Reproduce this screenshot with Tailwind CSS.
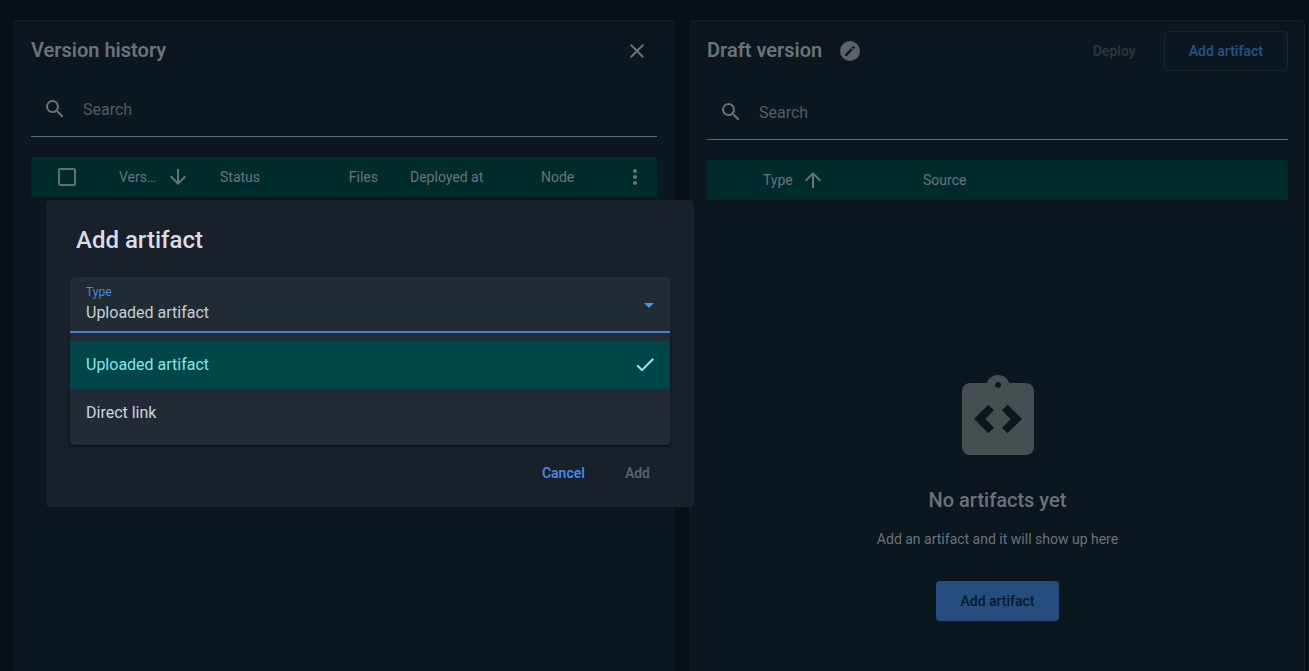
<!DOCTYPE html>
<html lang="en">

<head>
    <meta charset="UTF-8">
    <meta name="viewport" content="width=device-width, initial-scale=1.0">
    <title>Add artifact</title>
    <script src="https://cdn.jsdelivr.net/npm/@tailwindcss/browser@4"></script>
</head>

<body class="bg-[#080f17] font-['Roboto',sans-serif] text-sm text-[#69737b]">
    <main class="relative grid grid-cols-[660fr_615fr] gap-4 h-screen overflow-hidden pt-5 pl-3.5 pr-1">

        <!-- Version history -->
        <section class="rounded-t border border-b-0 border-[#151e26] bg-[#0b161e] px-4 pt-2.5">
            <header class="flex h-10 items-center justify-between mb-2.5">
                <h2 class="pb-0.5 text-xl leading-6 font-semibold">Version history</h2>
                <button type="button" aria-label="Close" class="flex size-10 items-center justify-center">
                    <svg class="size-6" viewBox="0 0 24 24" fill="currentColor">
                        <path d="M19 6.41 17.59 5 12 10.59 6.41 5 5 6.41 10.59 12 5 17.59 6.41 19 12 13.41 17.59 19 19 17.59 13.41 12z" />
                    </svg>
                </button>
            </header>

            <label class="flex h-14 items-center rounded-t border-b border-[#616b73] bg-[#0b181f] pl-3 mb-5">
                <svg class="size-6 shrink-0" viewBox="0 0 24 24" fill="currentColor">
                    <path d="M15.5 14h-.79l-.28-.27A6.471 6.471 0 0 0 16 9.5 6.5 6.5 0 1 0 9.5 16c1.61 0 3.09-.59 4.23-1.57l.27.28v.79l5 4.99L20.49 19l-4.99-5zm-6 0C7.01 14 5 11.99 5 9.5S7.01 5 9.5 5 14 7.01 14 9.5 11.99 14 9.5 14z" />
                </svg>
                <input type="text" placeholder="Search" aria-label="Search versions"
                    class="ml-4 w-full bg-transparent pt-0.5 text-base placeholder:text-[#525c63] outline-none">
            </label>

            <table class="w-full table-fixed">
                <thead class="bg-[#002b2d]">
                    <tr class="h-10 text-left">
                        <th class="w-[72px]">
                            <input type="checkbox" aria-label="Select all versions"
                                class="block mx-auto size-[18px] appearance-none rounded-xs border-2 border-[#5f6f74]">
                        </th>
                        <th class="w-[101px] pl-4 font-normal">
                            <div class="flex items-center gap-2.5">
                                <span>Vers…</span>
                                <svg class="size-6" viewBox="0 0 24 24" fill="currentColor">
                                    <path d="m20 12-1.41-1.41L13 16.17V4h-2v12.17l-5.58-5.59L4 12l8 8 8-8z" />
                                </svg>
                            </div>
                        </th>
                        <th class="w-[100px] pl-4 font-normal">Status</th>
                        <th class="w-[90px] pr-4 text-right font-normal">Files</th>
                        <th class="w-[131px] pl-4 font-normal">Deployed at</th>
                        <th class="w-[88px] pl-4 font-normal">Node</th>
                        <th>
                            <button type="button" aria-label="Columns" class="block mx-auto">
                                <svg class="size-6" viewBox="0 0 24 24" fill="currentColor">
                                    <path d="M12 8c1.1 0 2-.9 2-2s-.9-2-2-2-2 .9-2 2 .9 2 2 2zm0 2c-1.1 0-2 .9-2 2s.9 2 2 2 2-.9 2-2-.9-2-2-2zm0 6c-1.1 0-2 .9-2 2s.9 2 2 2 2-.9 2-2-.9-2-2-2z" />
                                </svg>
                            </button>
                        </th>
                    </tr>
                </thead>
            </table>
        </section>

        <!-- Draft version -->
        <section class="rounded-t border border-b-0 border-[#151e26] bg-[#0b161e] px-4 pt-2.5">
            <header class="flex h-10 items-center mb-[13px]">
                <h2 class="pb-0.5 text-xl leading-6 font-semibold">Draft version</h2>
                <svg class="ml-4 size-6" viewBox="0 0 24 24" fill="none">
                    <circle cx="12" cy="12" r="10" fill="#5a6467" />
                    <path fill="#0b161e" d="M7 15.2V17h1.8l6-6L13 9.2zM16.8 9c.25-.25.25-.6 0-.85l-.95-.95c-.25-.25-.6-.25-.85 0l-1.2 1.2 1.8 1.8z" />
                </svg>
                <button type="button" disabled class="ml-auto mr-7 font-semibold text-[#2d363d]">Deploy</button>
                <button type="button"
                    class="h-10 rounded border border-[#1a242c] px-6 font-semibold text-[#264f85]">Add artifact</button>
            </header>

            <label class="flex h-14 items-center rounded-t border-b border-[#616b73] bg-[#0b181f] pl-3 mb-5">
                <svg class="size-6 shrink-0" viewBox="0 0 24 24" fill="currentColor">
                    <path d="M15.5 14h-.79l-.28-.27A6.471 6.471 0 0 0 16 9.5 6.5 6.5 0 1 0 9.5 16c1.61 0 3.09-.59 4.23-1.57l.27.28v.79l5 4.99L20.49 19l-4.99-5zm-6 0C7.01 14 5 11.99 5 9.5S7.01 5 9.5 5 14 7.01 14 9.5 11.99 14 9.5 14z" />
                </svg>
                <input type="text" placeholder="Search" aria-label="Search artifacts"
                    class="ml-4 w-full bg-transparent pt-0.5 text-base placeholder:text-[#525c63] outline-none">
            </label>

            <table class="w-full table-fixed">
                <thead class="bg-[#002b2d]">
                    <tr class="h-10 text-left">
                        <th class="w-10"></th>
                        <th class="w-40 pl-4 font-normal">
                            <div class="flex items-center gap-2">
                                <span>Type</span>
                                <svg class="size-6" viewBox="0 0 24 24" fill="currentColor">
                                    <path d="m4 12 1.41 1.41L11 7.83V20h2V7.83l5.58 5.59L20 12l-8-8-8 8z" />
                                </svg>
                            </div>
                        </th>
                        <th class="pl-4 font-normal">Source</th>
                    </tr>
                </thead>
            </table>

            <div class="flex flex-col items-center pt-[171px]">
                <svg class="size-24" viewBox="0 0 24 24" fill="#464e51">
                    <path d="M19 3h-4.18C14.4 1.84 13.3 1 12 1s-2.4.84-2.82 2H5c-.14 0-.27.01-.4.04-.39.08-.74.28-1.01.55-.18.18-.33.4-.43.64-.1.23-.16.49-.16.77v14c0 .27.06.54.16.78s.25.45.43.64c.27.27.62.47 1.01.55.13.02.26.03.4.03h14c1.1 0 2-.9 2-2V5c0-1.1-.9-2-2-2zm-8 11.17-1.41 1.42L6 12l3.59-3.59L11 9.83 8.83 12 11 14.17zm1-9.92c-.41 0-.75-.34-.75-.75s.34-.75.75-.75.75.34.75.75-.34.75-.75.75zm2.41 11.34L13 14.17 15.17 12 13 9.83l1.41-1.42L18 12l-3.59 3.59z" />
                </svg>
                <h3 class="mt-5 text-xl leading-[26px] font-medium">No artifacts yet</h3>
                <p class="mt-4 leading-5">Add an artifact and it will show up here</p>
                <button type="button"
                    class="mt-8 h-10 rounded bg-[#254d80] px-6 font-medium text-[#061a2c]">Add artifact</button>
            </div>
        </section>

        <!-- Dialog -->
        <div role="dialog" aria-labelledby="dialogTitle"
            class="absolute top-[200px] left-[46px] w-[648px] rounded bg-[#18202a] px-6 pt-6 pb-3.5">
            <h2 id="dialogTitle" class="pl-1.5 text-2xl leading-8 font-medium text-[#d8dde5]">Add artifact</h2>

            <div class="relative mt-[21px]">
                <label for="type" class="absolute top-[7px] left-4 text-xs leading-4 text-[#4887e5]">Type</label>
                <select id="type"
                    class="block h-14 w-full appearance-none rounded-t border-b-2 border-[#4c88e4] bg-[#212b34] pt-[18px] pl-4 text-base text-[#c8cdd4] outline-none">
                    <option>Uploaded artifact</option>
                    <option>Direct link</option>
                </select>
                <svg class="pointer-events-none absolute top-4 right-[9px] size-6" viewBox="0 0 24 24" fill="#4c8df0">
                    <path d="m7 10 5 5 5-5z" />
                </svg>

                <ul role="listbox" aria-label="Type"
                    class="absolute top-full w-full rounded-b bg-[#212a36] py-2 text-base text-[#d0d5dd] shadow-sm shadow-black/60">
                    <li role="option" aria-selected="true"
                        class="flex h-12 items-center justify-between bg-[#004648] pl-4 pr-[13px] text-[#80e8ea]">
                        Uploaded artifact
                        <svg class="size-6" viewBox="0 0 24 24" fill="#8ceef5">
                            <path d="M9 15.67 4.83 11.5l-1.42 1.41L9 18.5l12-12-1.41-1.41z" />
                        </svg>
                    </li>
                    <li role="option" aria-selected="false" class="flex h-12 items-center px-4">Direct link</li>
                </ul>
            </div>

            <footer class="mt-30 flex justify-end">
                <button type="button" class="h-10 px-5 font-semibold text-[#4887e5]">Cancel</button>
                <button type="button" disabled class="h-10 px-5 font-semibold text-[#59616a]">Add</button>
            </footer>
        </div>
    </main>
</body>

</html>
